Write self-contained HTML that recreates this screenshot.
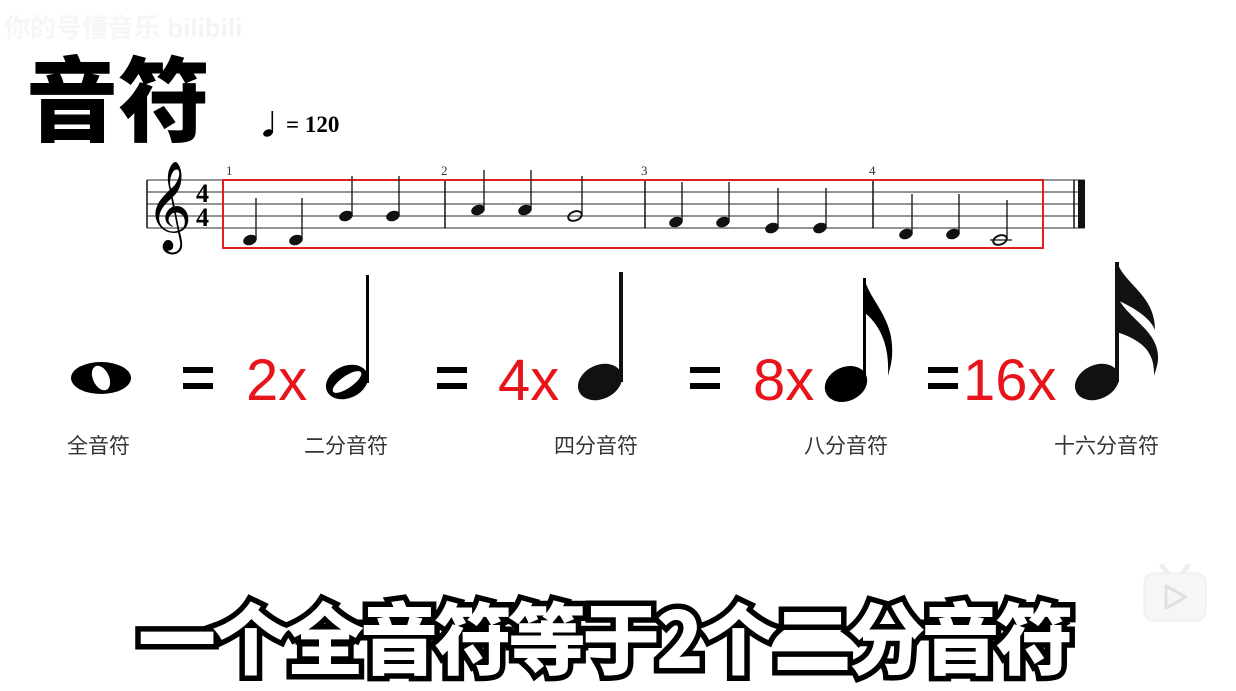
<!DOCTYPE html>
<html><head><meta charset="utf-8"><style>
html,body{margin:0;padding:0;background:#fff;}
body{width:1236px;height:686px;overflow:hidden;position:relative;font-family:"Liberation Sans","Noto Sans CJK SC",sans-serif;}
.t{position:absolute;white-space:nowrap;}
</style></head><body>
<div class="t" style="left:4px;top:8px;font-size:26px;color:#f6f6f6;font-weight:bold;">你的号懂音乐 <span style="color:#f4f4f4;">bilibili</span></div>
<div class="t" style="left:26px;top:40px;font-size:92px;font-weight:900;line-height:110px;font-family:'Noto Sans CJK SC',sans-serif;">音符</div>
<div class="t" style="left:286px;top:112px;font-size:23px;font-weight:bold;font-family:'Liberation Serif',serif;">= 120</div>

<svg width="1236" height="686" style="position:absolute;left:0;top:0" xmlns="http://www.w3.org/2000/svg">
<ellipse cx="268" cy="133" rx="5" ry="3.5" fill="#000" transform="rotate(-20 268 133)"/>
<rect x="271.5" y="111" width="1.6" height="22" fill="#000"/>
<g stroke="#555" stroke-width="1.3">
<line x1="147" x2="1085" y1="180" y2="180"/><line x1="147" x2="1085" y1="192" y2="192"/>
<line x1="147" x2="1085" y1="204" y2="204"/><line x1="147" x2="1085" y1="216" y2="216"/>
<line x1="147" x2="1085" y1="228" y2="228"/>
</g>
<g stroke="#111" stroke-width="1.5">
<line x1="147" x2="147" y1="180" y2="228"/>
<line x1="445" x2="445" y1="180" y2="228"/><line x1="645" x2="645" y1="180" y2="228"/>
<line x1="873" x2="873" y1="180" y2="228"/><line x1="1074" x2="1074" y1="180" y2="228"/>
</g>
<rect x="1078" y="180" width="7" height="48" fill="#111"/>
<text x="146" y="232" font-family="DejaVu Sans,serif" font-size="78">&#119070;</text>
<text x="196" y="202" font-family="Liberation Serif,serif" font-weight="bold" font-size="26">4</text>
<text x="196" y="226" font-family="Liberation Serif,serif" font-weight="bold" font-size="26">4</text>
<g font-family="Liberation Serif,serif" font-size="13" fill="#333">
<text x="226" y="175">1</text><text x="441" y="175">2</text><text x="641" y="175">3</text><text x="869" y="175">4</text>
</g>
<rect x="223" y="180" width="820" height="68" fill="none" stroke="#e02020" stroke-width="2"/>
<g fill="#111">
<ellipse cx="250" cy="240" rx="7" ry="5" transform="rotate(-20 250 240)"/><line x1="256" y1="238" x2="256" y2="198" stroke="#111" stroke-width="1.3"/>
<ellipse cx="296" cy="240" rx="7" ry="5" transform="rotate(-20 296 240)"/><line x1="302" y1="238" x2="302" y2="198" stroke="#111" stroke-width="1.3"/>
<ellipse cx="346" cy="216" rx="7" ry="5" transform="rotate(-20 346 216)"/><line x1="352" y1="214" x2="352" y2="176" stroke="#111" stroke-width="1.3"/>
<ellipse cx="393" cy="216" rx="7" ry="5" transform="rotate(-20 393 216)"/><line x1="399" y1="214" x2="399" y2="176" stroke="#111" stroke-width="1.3"/>
<ellipse cx="478" cy="210" rx="7" ry="5" transform="rotate(-20 478 210)"/><line x1="484" y1="208" x2="484" y2="170" stroke="#111" stroke-width="1.3"/>
<ellipse cx="525" cy="210" rx="7" ry="5" transform="rotate(-20 525 210)"/><line x1="531" y1="208" x2="531" y2="170" stroke="#111" stroke-width="1.3"/>
<ellipse cx="575" cy="216" rx="7" ry="4.5" fill="none" stroke="#111" stroke-width="2" transform="rotate(-20 575 216)"/><line x1="582" y1="214" x2="582" y2="176" stroke="#111" stroke-width="1.3"/>
<ellipse cx="676" cy="222" rx="7" ry="5" transform="rotate(-20 676 222)"/><line x1="682" y1="220" x2="682" y2="182" stroke="#111" stroke-width="1.3"/>
<ellipse cx="723" cy="222" rx="7" ry="5" transform="rotate(-20 723 222)"/><line x1="729" y1="220" x2="729" y2="182" stroke="#111" stroke-width="1.3"/>
<ellipse cx="772" cy="228" rx="7" ry="5" transform="rotate(-20 772 228)"/><line x1="778" y1="226" x2="778" y2="188" stroke="#111" stroke-width="1.3"/>
<ellipse cx="820" cy="228" rx="7" ry="5" transform="rotate(-20 820 228)"/><line x1="826" y1="226" x2="826" y2="188" stroke="#111" stroke-width="1.3"/>
<ellipse cx="906" cy="234" rx="7" ry="5" transform="rotate(-20 906 234)"/><line x1="912" y1="232" x2="912" y2="194" stroke="#111" stroke-width="1.3"/>
<ellipse cx="953" cy="234" rx="7" ry="5" transform="rotate(-20 953 234)"/><line x1="959" y1="232" x2="959" y2="194" stroke="#111" stroke-width="1.3"/>
<ellipse cx="1000" cy="240" rx="7" ry="4.5" fill="none" stroke="#111" stroke-width="2" transform="rotate(-20 1000 240)"/><line x1="1007" y1="238" x2="1007" y2="200" stroke="#111" stroke-width="1.3"/>
<line x1="990" x2="1012" y1="240" y2="240" stroke="#111" stroke-width="1.3"/>
</g>

<ellipse cx="101" cy="378" rx="30" ry="16" fill="#000"/>
<ellipse cx="101" cy="378" rx="8" ry="13" fill="#fff" transform="rotate(-25 101 378)"/>
<g fill="#000">
<rect x="183" y="367" width="30" height="6"/><rect x="183" y="383" width="30" height="6"/>
<rect x="437" y="367" width="30" height="6"/><rect x="437" y="383" width="30" height="6"/>
<rect x="690" y="367" width="30" height="6"/><rect x="690" y="383" width="30" height="6"/>
<rect x="928" y="367" width="30" height="6"/><rect x="928" y="383" width="30" height="6"/>
</g>
<g font-family="Liberation Sans,sans-serif" font-size="58" fill="#e8141c">
<text x="246" y="400">2x</text><text x="498" y="400">4x</text><text x="753" y="400">8x</text><text x="963" y="400">16x</text>
</g>
<ellipse cx="347" cy="382" rx="22" ry="16" fill="#000" transform="rotate(-25 347 382)"/>
<ellipse cx="347" cy="382" rx="17" ry="6" fill="#fff" transform="rotate(-35 347 382)"/>
<rect x="366" y="275" width="3" height="108" fill="#000"/>
<ellipse cx="600" cy="382" rx="23" ry="17" fill="#111" transform="rotate(-25 600 382)"/>
<rect x="619" y="272" width="4" height="110" fill="#111"/>
<ellipse cx="846" cy="384" rx="22" ry="17" fill="#000" transform="rotate(-25 846 384)"/>
<rect x="863" y="278" width="3" height="106" fill="#000"/>
<path d="M864 278 C870 300 890 315 892 345 C893 360 890 368 888 376 C889 355 886 330 864 312 Z" fill="#000"/>
<ellipse cx="1097" cy="382" rx="23" ry="17" fill="#111" transform="rotate(-25 1097 382)"/>
<rect x="1115" y="262" width="4" height="120" fill="#111"/>
<path d="M1117 262 C1125 285 1155 295 1155 330 C1150 318 1135 308 1117 300 Z" fill="#111"/>
<path d="M1117 295 C1125 318 1160 330 1158 360 C1157 368 1155 372 1154 376 C1155 350 1140 340 1117 332 Z" fill="#111"/>

<g opacity="0.9">
<line x1="1162" y1="566" x2="1168" y2="574" stroke="#eee" stroke-width="5" stroke-linecap="round"/>
<line x1="1188" y1="566" x2="1182" y2="574" stroke="#eee" stroke-width="5" stroke-linecap="round"/>
<rect x="1144" y="573" width="62" height="48" rx="10" fill="#f6f6f6" stroke="#e8e8e8"/>
<path d="M1166 586 L1166 608 L1186 597 Z" fill="none" stroke="#ddd" stroke-width="3" stroke-linejoin="round"/>
</g>
</svg>

<div class="t" style="left:67px;top:430px;font-size:21px;color:#333;">全音符</div>
<div class="t" style="left:304px;top:430px;font-size:21px;color:#333;">二分音符</div>
<div class="t" style="left:554px;top:430px;font-size:21px;color:#333;">四分音符</div>
<div class="t" style="left:804px;top:430px;font-size:21px;color:#333;">八分音符</div>
<div class="t" style="left:1054px;top:430px;font-size:21px;color:#333;">十六分音符</div>

<div class="t" style="left:138px;top:590px;font-size:78px;line-height:90px;font-weight:900;color:#fff;letter-spacing:-4px;font-family:'Noto Sans CJK SC',sans-serif;-webkit-text-stroke:11px #000;paint-order:stroke fill;">一个全音符等于2个二分音符</div>
</body></html>
